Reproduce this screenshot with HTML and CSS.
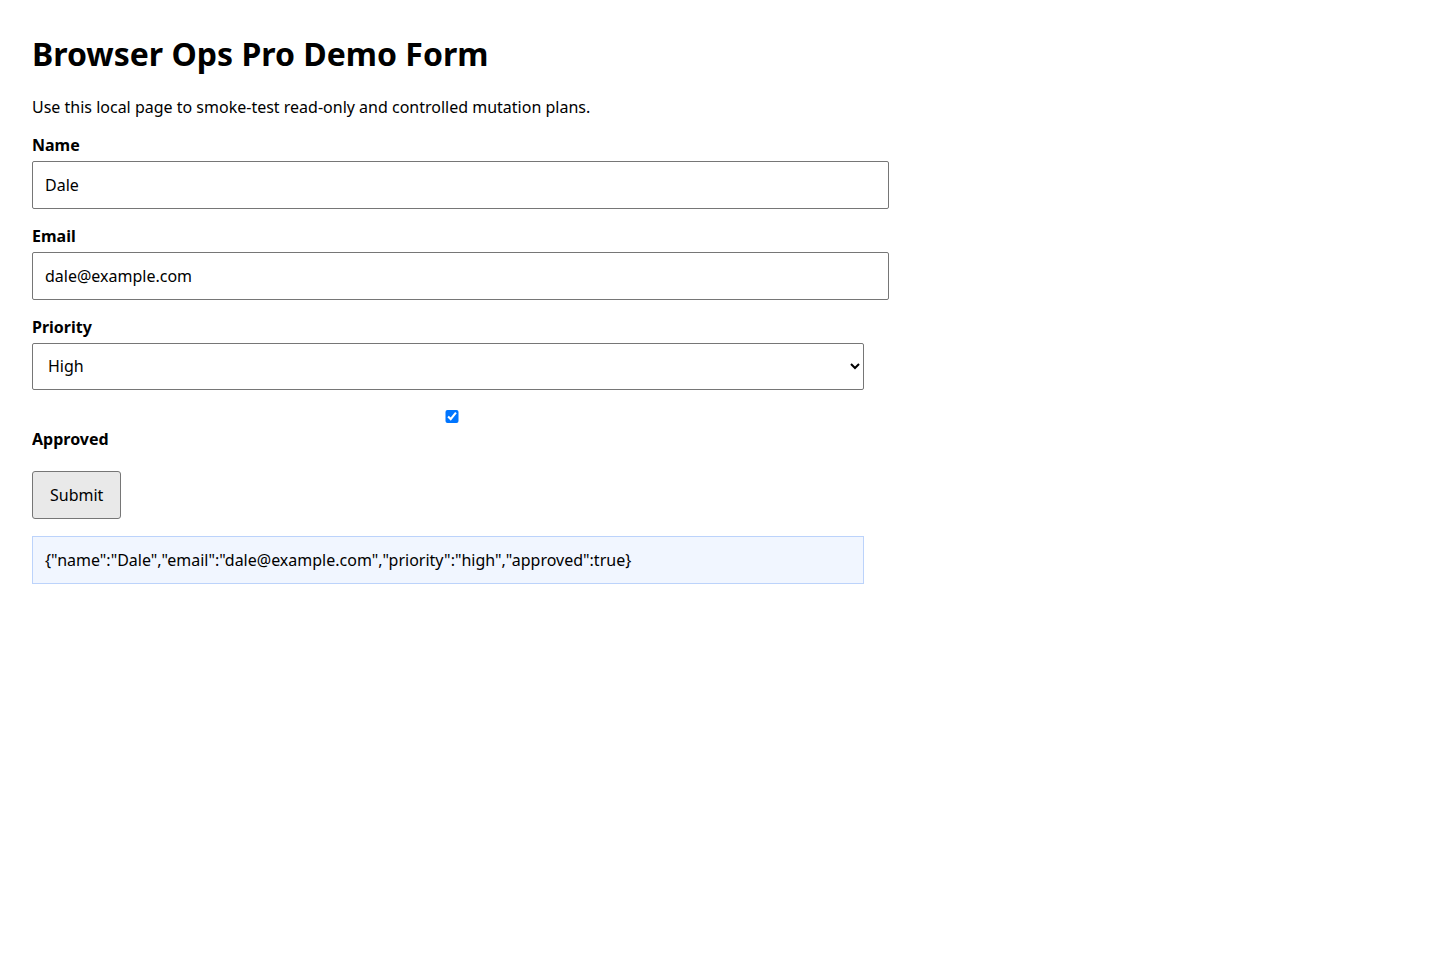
FILE: index.html
```html
<!DOCTYPE html>
<html lang="en">
<head>
  <meta charset="UTF-8">
  <title>Browser Ops Pro Demo Form</title>
  <link rel="stylesheet" href="styles.css">
</head>
<body>
  <h1>Browser Ops Pro Demo Form</h1>
  <p>Use this local page to smoke-test read-only and controlled mutation plans.</p>

  <form class="demo-form" id="demo-form">
    <label class="field-label" for="name">Name</label>
    <input class="text-input" type="text" id="name" value="Dale">

    <label class="field-label" for="email">Email</label>
    <input class="text-input" type="email" id="email" value="dale@example.com">

    <label class="field-label" for="priority">Priority</label>
    <select class="select-input" id="priority">
      <option value="low">Low</option>
      <option value="normal">Normal</option>
      <option value="high" selected>High</option>
    </select>

    <input class="check-input" type="checkbox" id="approved" checked>
    <label class="field-label check-label" for="approved">Approved</label>

    <div class="actions">
      <button type="submit">Submit</button>
    </div>
  </form>

  <div class="output" id="output">{"name":"Dale","email":"dale@example.com","priority":"high","approved":true}</div>
</body>
</html>
```

FILE: styles.css
```css
body {
  margin: 32px;
  font-family: "Noto Sans", sans-serif;
  font-size: 16px;
  color: #000;
}

h1 {
  font-size: 32px;
  margin: 0 0 21px;
}

p {
  margin: 0 0 16px;
}

.demo-form {
  width: 857px;
}

.field-label {
  display: block;
  font-weight: 700;
  margin: 16px 0 5px;
}

.text-input {
  display: block;
  box-sizing: border-box;
  width: 100%;
  height: 47.8px;
  padding: 12px;
  margin: 0;
  font: inherit;
  color: #000;
  border: 1px solid #767676;
  border-radius: 2px;
}

.select-input {
  display: block;
  box-sizing: border-box;
  width: 832px;
  height: 47px;
  padding: 0 11px;
  margin: 0;
  font: inherit;
  color: #000;
  background: #fff;
  border: 1px solid #767676;
  border-radius: 2px;
}

.check-input {
  display: block;
  width: 832px;
  margin: 20px 3px 0 4px;
}

.check-label {
  margin-top: 5px;
}

.actions {
  margin-top: 21px;
}

button {
  font: inherit;
  color: #000;
  height: 48px;
  padding: 0 17px;
  margin: 0;
  background: #e9e9e9;
  border: 1px solid #767676;
  border-radius: 3px;
}

.output {
  box-sizing: border-box;
  width: 832px;
  margin-top: 17px;
  padding: 12px;
  background: #f1f6ff;
  border: 1px solid #bcd3fb;
}
```
